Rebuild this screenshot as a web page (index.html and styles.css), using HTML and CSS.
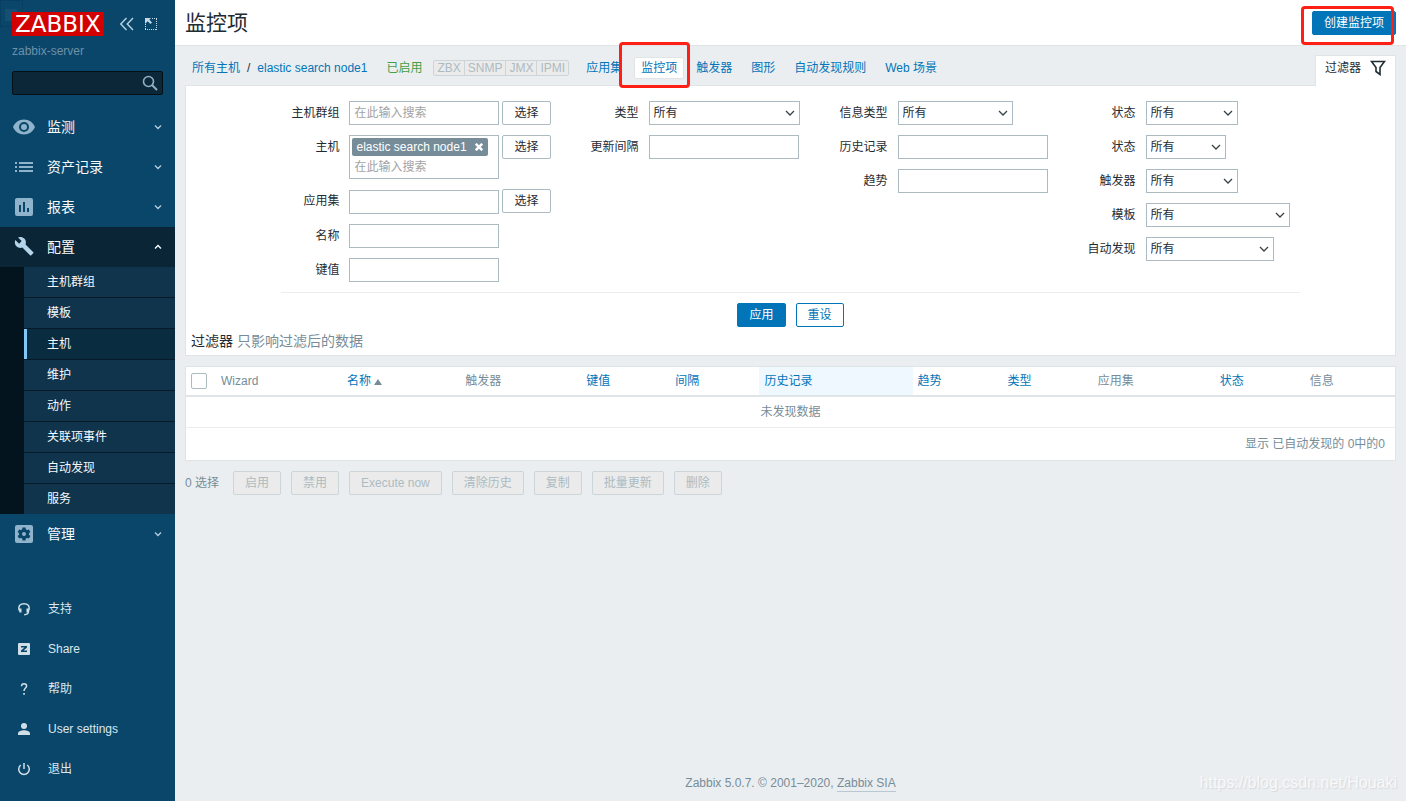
FILE: index.html
```html
<!DOCTYPE html>
<html lang="zh-CN">
<head>
<meta charset="utf-8">
<title>监控项</title>
<link rel="stylesheet" href="styles.css">
</head>
<body>
<div class="layout">
<aside class="sidebar">
  <div class="ghost"></div>
  <div class="brand">
    <a class="logo" href="#">ZABBIX</a>
    <div class="brand-tools">
      <button class="icon-btn" type="button" aria-label="收起">
        <svg width="16" height="16" viewBox="0 0 16 16" fill="none" stroke="#b5cfdf" stroke-width="1.5"><path d="M7.5 2 1.8 8l5.7 6M14 2 8.300 8l5.700 6"/></svg>
      </button>
      <button class="icon-btn" type="button" aria-label="隐藏">
        <svg width="16" height="16" viewBox="0 0 16 16"><path d="M2 2h6L6.300 3.700 9 6.400 7.400 8 4.700 5.300 2 8z" fill="#c5dae6"/><path d="M9 2.500h5M13.500 3v11M13 13.500H2M2.500 13V8" fill="none" stroke="#c5dae6" stroke-dasharray="1 1"/></svg>
      </button>
    </div>
  </div>
  <div class="server">zabbix-server</div>
  <form class="search">
    <input type="search" aria-label="搜索">
    <button class="icon-btn" type="button" aria-label="搜索">
      <svg width="16" height="16" viewBox="0 0 16 16" fill="none" stroke="#92b0c1"><circle cx="6.500" cy="6.500" r="5" stroke-width="1.600"/><path d="M10 10l5 5" stroke-width="2"/></svg>
    </button>
  </form>
  <nav>
    <ul class="menu">
      <li><a class="menu-link" href="#">
        <svg class="menu-icon" viewBox="0 0 24 24"><path fill-rule="evenodd" d="M12 4.500C7 4.500 2.700 7.600 1 12c1.700 4.400 6 7.500 11 7.500s9.300-3.100 11-7.500c-1.700-4.400-6-7.500-11-7.500zM12 17a5 5 0 1 1 0-10 5 5 0 0 1 0 10zm0-8a3 3 0 1 0 0 6 3 3 0 0 0 0-6z"/></svg>
        <span>监测</span><svg class="chev" viewBox="0 0 8 8"><path d="M1 2.500 4 5.500 7 2.500"/></svg></a></li>
      <li><a class="menu-link" href="#">
        <svg class="menu-icon" viewBox="0 0 24 24"><path d="M3 7h2v2H3zM3 11h2v2H3zM3 15h2v2H3zM7 7h14v2H7zM7 11h14v2H7zM7 15h14v2H7z"/></svg>
        <span>资产记录</span><svg class="chev" viewBox="0 0 8 8"><path d="M1 2.500 4 5.500 7 2.500"/></svg></a></li>
      <li><a class="menu-link" href="#">
        <svg class="menu-icon" viewBox="0 0 24 24"><path fill-rule="evenodd" d="M5 3h14a2 2 0 0 1 2 2v14a2 2 0 0 1-2 2H5a2 2 0 0 1-2-2V5c0-1.100.900-2 2-2zm2 7v7h2v-7zm4-3v10h2V7zm4 6v4h2v-4z"/></svg>
        <span>报表</span><svg class="chev" viewBox="0 0 8 8"><path d="M1 2.500 4 5.500 7 2.500"/></svg></a></li>
      <li><a class="menu-link open" href="#">
        <svg class="menu-icon" viewBox="0 0 24 24"><path d="M22.700 19l-9.100-9.100c.900-2.300.400-5-1.500-6.900-2-2-5-2.400-7.400-1.300L9 6 6 9 1.600 4.700C.400 7.100.900 10.100 2.900 12.100c1.900 1.900 4.600 2.400 6.900 1.500l9.100 9.100c.400.400 1 .400 1.400 0l2.300-2.300c.500-.400.500-1.100.100-1.400z" transform="translate(2 1) scale(.85)"/></svg>
        <span>配置</span><svg class="chev" viewBox="0 0 8 8"><path d="M1 5.500 4 2.500 7 5.500"/></svg></a>
        <ul class="submenu">
          <li><a href="#">主机群组</a></li>
          <li><a href="#">模板</a></li>
          <li><a class="current" href="#">主机</a></li>
          <li><a href="#">维护</a></li>
          <li><a href="#">动作</a></li>
          <li><a href="#">关联项事件</a></li>
          <li><a href="#">自动发现</a></li>
          <li><a href="#">服务</a></li>
        </ul>
      </li>
      <li><a class="menu-link" href="#">
        <svg class="menu-icon" viewBox="0 0 24 24"><rect x="3" y="3" width="18" height="18" rx="2"/><g fill="#0a466a"><circle cx="12" cy="12" r="5"/><path d="M10.500 5.500h3l.500 3h-4zM10.500 18.500h3l.500-3h-4z"/><path d="M10.500 5.500h3l.500 3h-4zM10.500 18.500h3l.500-3h-4z" transform="rotate(60 12 12)"/><path d="M10.500 5.500h3l.500 3h-4zM10.500 18.500h3l.500-3h-4z" transform="rotate(120 12 12)"/></g><circle cx="12" cy="12" r="2"/></svg>
        <span>管理</span><svg class="chev" viewBox="0 0 8 8"><path d="M1 2.500 4 5.500 7 2.500"/></svg></a></li>
    </ul>
  </nav>
  <ul class="user-menu">
    <li><a href="#"><svg viewBox="0 0 16 16"><path d="M3.300 9.500C1.700 4.500 4.500 2.700 8 2.700s6.300 1.800 4.700 6.800M12.600 9.500c0 3-1.600 4.200-4.400 4.200" fill="none" stroke="#cfdfe8" stroke-width="1.400"/><path d="M2.500 7.500h3v4h-2zM13.500 7.500h-3v4h2z"/></svg>支持</a></li>
    <li><a href="#"><svg viewBox="0 0 16 16"><rect x="2" y="2" width="12" height="12" rx="1"/><path d="M5 5h6v1.500L7.500 9.500H11V11H5V9.500L8.500 6.500H5z" fill="#0a466a"/></svg>Share</a></li>
    <li><a href="#"><svg viewBox="0 0 16 16"><path d="M5.500 5.300C5.500 3.500 6.500 2.700 8 2.700s2.600.900 2.600 2.300C10.600 7 8 7.200 8 10" fill="none" stroke="#cfdfe8" stroke-width="1.500"/><path d="M7.200 12h1.700v1.700H7.200z"/></svg>帮助</a></li>
    <li><a href="#"><svg viewBox="0 0 16 16"><circle cx="8" cy="5" r="3"/><path d="M2 14v-1.500C2 10.500 5.500 9.300 8 9.300s6 1.200 6 3.200V14z"/></svg>User settings</a></li>
    <li><a href="#"><svg viewBox="0 0 16 16"><path d="M4.700 4A5.300 5.300 0 1 0 11.300 4M8 2v6" fill="none" stroke="#cfdfe8" stroke-width="1.500"/></svg>退出</a></li>
  </ul>
</aside>

<div class="page">
  <header class="page-head">
    <h1>监控项</h1>
    <div class="marked">
      <button class="btn btn-primary" type="button">创建监控项</button>
      <span class="mark mark-create"></span>
    </div>
  </header>
  <main class="content">
    <div class="subhead">
      <nav class="crumbs">
        <ul>
          <li><a href="#">所有主机</a></li>
          <li class="slash">/</li>
          <li><a href="#">elastic search node1</a></li>
          <li class="enabled">已启用</li>
          <li class="agents"><span>ZBX</span><span>SNMP</span><span>JMX</span><span>IPMI</span></li>
          <li><a href="#">应用集</a></li>
          <li class="marked selected"><a href="#">监控项</a><span class="mark mark-tab"></span></li>
          <li><a href="#">触发器</a></li>
          <li><a href="#">图形</a></li>
          <li><a href="#">自动发现规则</a></li>
          <li><a href="#">Web 场景</a></li>
        </ul>
      </nav>
      <a class="filter-tab" href="#">过滤器
        <svg width="16" height="16" viewBox="0 0 16 16" fill="none" stroke="#1f2c33" stroke-width="1.600"><path d="M1.500 1.500h13L10 7.500V14.500L6 11.500V7.500z"/></svg>
      </a>
    </div>

    <form class="filter">
      <div class="filter-fields">
        <div class="col">
          <div class="row"><label for="groups">主机群组</label><div class="field"><input class="w-input" id="groups" type="text" placeholder="在此输入搜索"><button class="btn btn-grey" type="button">选择</button></div></div>
          <div class="row"><label for="hosts">主机</label><div class="field">
            <div class="multi w-input"><span class="chip">elastic search node1<button type="button" aria-label="移除"><svg width="8" height="8" viewBox="0 0 8 8" stroke="#fff" stroke-width="2.500"><path d="M0.800.800 7.200 7.200M7.200.800.800 7.200"/></svg></button></span><input id="hosts" type="text" placeholder="在此输入搜索"></div>
            <button class="btn btn-grey" type="button">选择</button></div></div>
          <div class="row row-app"><label for="app">应用集</label><div class="field"><input class="w-input" id="app" type="text"><button class="btn btn-grey" type="button">选择</button></div></div>
          <div class="row"><label for="name">名称</label><div class="field"><input class="w-input" id="name" type="text"></div></div>
          <div class="row"><label for="key">键值</label><div class="field"><input class="w-input" id="key" type="text"></div></div>
        </div>
        <div class="col">
          <div class="row"><label for="type">类型</label><select class="w-type" id="type"><option>所有</option></select></div>
          <div class="row"><label for="delay">更新间隔</label><input class="w-input" id="delay" type="text"></div>
        </div>
        <div class="col">
          <div class="row"><label for="vtype">信息类型</label><select class="w-info" id="vtype"><option>所有</option></select></div>
          <div class="row"><label for="history">历史记录</label><input class="w-input" id="history" type="text"></div>
          <div class="row"><label for="trends">趋势</label><input class="w-input" id="trends" type="text"></div>
        </div>
        <div class="col">
          <div class="row"><label for="state">状态</label><select class="w-medium" id="state"><option>所有</option></select></div>
          <div class="row"><label for="status">状态</label><select class="w-small" id="status"><option>所有</option></select></div>
          <div class="row"><label for="trig">触发器</label><select class="w-medium" id="trig"><option>所有</option></select></div>
          <div class="row"><label for="tpl">模板</label><select class="w-large" id="tpl"><option>所有</option></select></div>
          <div class="row"><label for="disc">自动发现</label><select class="w-disc" id="disc"><option>所有</option></select></div>
        </div>
      </div>
      <div class="filter-buttons">
        <button class="btn btn-primary" type="button">应用</button>
        <button class="btn btn-alt" type="button">重设</button>
      </div>
      <p class="filter-note"><b>过滤器</b> 只影响过滤后的数据</p>
    </form>

    <table class="items">
      <colgroup><col class="c-check"><col class="c-wizard"><col class="c-name"><col class="c-trig"><col class="c-key"><col class="c-key"><col class="c-history"><col class="c-trend"><col class="c-trend"><col class="c-app"><col class="c-trend"><col class="c-trend"></colgroup>
      <thead>
        <tr>
          <th><input type="checkbox" aria-label="全选"></th>
          <th>Wizard</th>
          <th><a href="#">名称<span class="arrow"></span></a></th>
          <th>触发器</th>
          <th><a href="#">键值</a></th>
          <th><a href="#">间隔</a></th>
          <th class="hover"><a href="#">历史记录</a></th>
          <th><a href="#">趋势</a></th>
          <th><a href="#">类型</a></th>
          <th>应用集</th>
          <th><a href="#">状态</a></th>
          <th>信息</th>
        </tr>
      </thead>
      <tbody>
        <tr><td class="empty" colspan="12">未发现数据</td></tr>
        <tr><td class="total" colspan="12">显示 已自动发现的 0中的0</td></tr>
      </tbody>
    </table>

    <div class="actions">
      <span class="count">0 选择</span>
      <button class="btn" type="button" disabled>启用</button>
      <button class="btn" type="button" disabled>禁用</button>
      <button class="btn" type="button" disabled>Execute now</button>
      <button class="btn" type="button" disabled>清除历史</button>
      <button class="btn" type="button" disabled>复制</button>
      <button class="btn" type="button" disabled>批量更新</button>
      <button class="btn" type="button" disabled>删除</button>
    </div>
  </main>
  <footer class="page-foot">Zabbix 5.0.7. © 2001–2020, <a href="#">Zabbix SIA</a></footer>
  <div class="watermark">https://blog.csdn.net/Houaki</div>
</div>
</div>
</body>
</html>
```

FILE: styles.css
```css
* { box-sizing: border-box; }
body {
  margin: 0;
  background: #ebeef0;
  color: #1f2c33;
  font: 12px/18px "Liberation Sans", "Noto Sans CJK SC", sans-serif;
}
ul { list-style: none; margin: 0; padding: 0; }
a { color: #0275b8; text-decoration: none; }
button, input, select { font: inherit; color: inherit; margin: 0; }
svg { display: block; }

.layout { display: flex; min-height: 100vh; }

/* Sidebar */
.sidebar {
  position: relative;
  display: flex;
  flex-direction: column;
  flex: 0 0 175px;
  min-width: 0;
  background: #0a466a;
}
.ghost {
  position: absolute;
  top: 0;
  left: 0;
  width: 23px;
  height: 27px;
  border: 1px solid rgba(0, 0, 0, .1);
}
.ghost::after {
  content: "";
  position: absolute;
  top: 8px;
  left: 4px;
  width: 12px;
  height: 12px;
  background: rgba(255, 255, 255, .05);
}
.brand { display: flex; align-items: center; gap: 15px; padding: 12px 12px 0; }
.logo {
  position: relative;
  padding: 0 3px;
  background: #d40000;
  color: #fff;
  font: 23px/24px "DejaVu Sans", sans-serif;
}
.brand-tools { display: flex; gap: 8px; }
.icon-btn { flex: none; padding: 0; border: 0; background: none; }
.server { padding: 6px 12px 0; color: #6c91a9; }
.search {
  display: flex;
  align-items: center;
  height: 24px;
  margin: 11px 12px 12px;
  padding-right: 4px;
  background: #0b2738;
  border: 1px solid #040e15;
  border-radius: 2px;
}
.search input {
  flex: 1;
  width: 100%;
  min-width: 0;
  padding: 0 5px;
  background: none;
  border: 0;
  color: #fff;
}
.menu-link {
  display: flex;
  align-items: center;
  height: 40px;
  padding: 0 13px 0 12px;
  color: #f5fafd;
  font-size: 14px;
}
.menu-link span { flex: 1; padding-left: 11px; }
.menu-icon { width: 24px; height: 24px; fill: #8fb3cb; }
.chev { width: 8px; height: 8px; fill: none; stroke: #b5cfdf; stroke-width: 1.3px; }
.menu-link.open { background: #0a2636; }
.open .menu-icon { fill: #b5d5ea; }
.open .chev { stroke: #fff; }
.submenu { border-left: 24px solid #04141e; background: #0f344c; }
.submenu li + li { border-top: 1px solid #061a27; }
.submenu a {
  display: block;
  padding-left: 20px;
  border-left: 3px solid transparent;
  color: #f5fafd;
  line-height: 30px;
}
.submenu .current { background: #0a2c40; border-left-color: #80c8fa; }
.user-menu { margin-top: auto; padding-bottom: 12px; }
.user-menu a {
  display: flex;
  align-items: center;
  gap: 16px;
  height: 40px;
  padding-left: 16px;
  color: #dbe8ef;
}
.user-menu svg { width: 16px; height: 16px; fill: #cfdfe8; }

/* Page frame */
.page { position: relative; display: flex; flex: 1; flex-direction: column; min-width: 0; }
.page-head {
  display: flex;
  align-items: center;
  justify-content: space-between;
  padding: 5px 10px;
  height: 46px;
  background: #fff;
  border-bottom: 1px solid #dfe4e7;
}
h1 { margin: 0; font-size: 21px; font-weight: normal; line-height: 28px; }
.content { padding: 9px 10px 0; }
.page-foot { margin-top: auto; padding-bottom: 9px; text-align: center; color: #768d99; }
.page-foot a { display: inline-block; color: #768d99; line-height: 15px; border-bottom: 1px solid #b8c8d0; }
.watermark {
  position: absolute;
  right: 9px;
  bottom: 8px;
  color: #f7f9fa;
  font-size: 16px;
  line-height: 20px;
  text-shadow: 1px 1px 1px #d3d8db;
}
.marked { position: relative; }
.mark {
  position: absolute;
  border: 3px solid #ff2015;
  border-radius: 4px;
  pointer-events: none;
}
.mark-create { inset: -5px 2px -10px -11px; }
.mark-tab { inset: -16px -7px -10px -16px; }

/* Buttons */
.btn {
  height: 24px;
  padding: 0 11px;
  border: 1px solid #0275b8;
  border-radius: 2px;
  line-height: 22px;
  white-space: nowrap;
}
.btn-primary { background: #0275b8; color: #fff; }
.btn-alt { background: #fff; color: #0275b8; }
.btn-grey { background: #fff; border-color: #acbbc2; }
.btn:disabled { background: #ebebeb; border-color: #ccd5d9; color: #acbbc2; }

/* Breadcrumbs and object tabs */
.subhead { display: flex; justify-content: space-between; }
.crumbs ul { display: flex; align-items: center; gap: 5px; height: 26px; }
.crumbs li { padding: 0 6px; border: 1px solid transparent; line-height: 20px; white-space: nowrap; }
.crumbs .slash { padding: 0; margin: 0 -6px; }
.crumbs .enabled { color: #429e47; }
.crumbs .agents {
  display: flex;
  margin: 0 5px 0 -1px;
  padding: 0;
  border-color: #ccd5d9;
  border-radius: 2px;
  background: #ebebeb;
  color: #acbbc2;
  line-height: 14px;
}
.agents span { padding: 0 3px; }
.agents span + span { border-left: 1px solid #ccd5d9; }
.crumbs .selected { background: #fff; border-color: #dfe4e7; border-radius: 2px; }
.filter-tab {
  position: relative;
  display: flex;
  align-items: center;
  gap: 9px;
  height: 31px;
  margin-bottom: -1px;
  padding: 0 9px 6px;
  background: #fff;
  border: 1px solid #dfe4e7;
  border-bottom: 0;
  color: #1f2c33;
}

/* Filter */
.filter { padding: 15px 5px 4px; background: #fff; border: 1px solid #dfe4e7; }
.filter-fields {
  display: flex;
  gap: 40px;
  width: fit-content;
  margin: 0 auto;
  padding: 0 10px 10px;
  border-bottom: 1px solid #ebeef0;
}
.col { display: flex; flex-direction: column; gap: 10px; }
.row { display: flex; align-items: flex-start; gap: 10px; }
.row-app { min-height: 25px; }
.row-app input { align-self: flex-end; }
.row label { width: 48px; text-align: right; line-height: 24px; white-space: nowrap; }
.field { display: flex; gap: 3px; align-self: stretch; align-items: flex-start; }
.row input, .row select, .multi {
  height: 24px;
  padding: 0 4px;
  background: #fff;
  border: 1px solid #acbbc2;
  border-radius: 0;
}
.row input::placeholder { color: #a3a3a3; opacity: 1; }
.row select {
  appearance: none;
  padding: 0 4px;
  background: #fff url("data:image/svg+xml,%3Csvg xmlns='http://www.w3.org/2000/svg' width='10' height='8'%3E%3Cpath d='M1 2l4 4 4-4' fill='none' stroke='%23384247' stroke-width='1.3'/%3E%3C/svg%3E") no-repeat right 4px center;
}
.row .multi { height: 44px; padding: 2px; }
.multi input { display: block; width: 100%; height: 22px; padding: 0 2px; border: 0; }
.chip {
  display: flex;
  align-items: center;
  gap: 8px;
  width: fit-content;
  padding: 0 5px 0 4px;
  background: #768d99;
  border-radius: 2px;
  color: #fff;
  white-space: nowrap;
}
.chip button { padding: 0; border: 0; background: none; }
.w-input { width: 150px; }
.w-type { width: 151px; }
.w-info { width: 115px; }
.w-small { width: 80px; }
.w-medium { width: 92px; }
.w-large { width: 144px; }
.w-disc { width: 128px; }
.filter-buttons { display: flex; justify-content: center; gap: 10px; padding: 10px 0 4px; }
.filter-note { margin: 0; color: #768d99; font-size: 14px; line-height: 20px; }
.filter-note b { color: #1f2c33; font-weight: normal; }

/* Items table */
.items {
  width: 100%;
  margin-top: 10px;
  table-layout: fixed;
  border-collapse: separate;
  border-spacing: 0;
  background: #fff;
  border: 1px solid #dfe4e7;
  color: #768d99;
}
.items th {
  height: 30px;
  padding: 0 5px;
  border-bottom: 2px solid #dfe4e7;
  font-weight: normal;
  text-align: left;
  white-space: nowrap;
}
.items .hover { background: #f0f8ff; }
.items input {
  display: block;
  width: 16px;
  height: 16px;
  appearance: none;
  background: #fff;
  border: 1px solid #acbbc2;
  border-radius: 2px;
}
.arrow {
  display: inline-block;
  margin-left: 3px;
  border: 4px solid transparent;
  border-top: 0;
  border-bottom: 6px solid #768d99;
}
.items td { padding: 0 10px; line-height: 30px; }
.items .empty { text-align: center; border-bottom: 1px solid #ebeef0; }
.items .total { text-align: right; line-height: 32px; }
.c-check { width: 30px; }
.c-wizard { width: 126px; }
.c-name { width: 118px; }
.c-trig { width: 121px; }
.c-key { width: 89px; }
.c-history { width: 153px; }
.c-trend { width: 90px; }
.c-app { width: 122px; }

.actions { display: flex; align-items: center; gap: 10px; padding: 10px 0; }
.count { margin-right: 4px; color: #768d99; }
```
